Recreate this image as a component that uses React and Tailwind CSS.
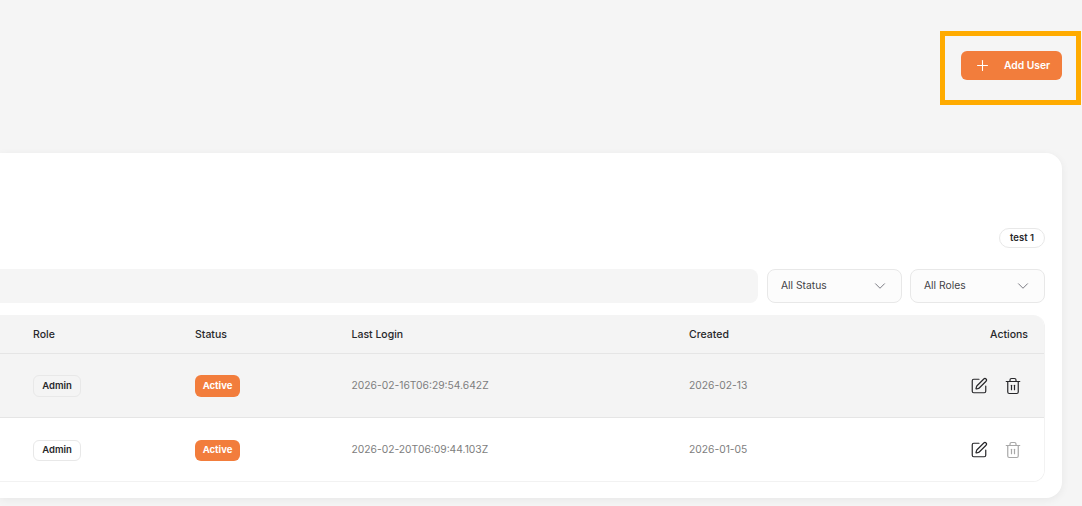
import React from "react";
import { Plus, ChevronDown, SquarePen, Trash2 } from "lucide-react";

const cols = "grid grid-cols-[195px_156.5px_337.5px_1fr] items-center pr-4";

function Row({ login, created, bg, trash, border, h, pill, pillH }) {
  return (
    <div className={`${cols} ${bg} ${border} ${h}`}>
      <div className="flex">
        <span className={`ml-[33px] flex ${pillH} w-[48px] items-center justify-center rounded-md border border-[#e8e8e8] pt-px ${pill} text-[9.5px] font-semibold text-[#27272a]`}>
          Admin
        </span>
      </div>
      <div className="flex">
        <span className={`flex ${pillH} w-[45px] items-center justify-center rounded-md bg-[#f27d3c] pt-px text-[9.5px] font-bold text-white`}>
          Active
        </span>
      </div>
      <div className="text-[10.3px] text-[#7d7d7d]">{login}</div>
      <div className="flex items-center justify-between">
        <span className="text-[10.3px] text-[#7d7d7d]">{created}</span>
        <div className="flex items-center gap-[16px] pr-[6px]">
          <SquarePen size={18} strokeWidth={1.6} className="text-[#27272a]" />
          <Trash2 size={18} strokeWidth={1.6} className={trash} />
        </div>
      </div>
    </div>
  );
}

export default function App() {
  return (
    <div className="relative h-[506px] w-[1082px] overflow-hidden bg-[#f5f5f5] font-['Inter',sans-serif]">
      <header className="flex h-[153px] items-start justify-end pr-5 pt-[51px]">
        <button className="flex h-[29px] w-[101px] items-center rounded-md bg-[#f27d3c] pl-[13px] text-[10.3px] font-semibold text-white">
          <Plus size={17} strokeWidth={1.5} />
          <span className="ml-[13px]">Add User</span>
        </button>
      </header>
      <div className="absolute left-[940px] top-[31px] h-[74px] w-[141px] border-[5px] border-[#ffab00]" />

      <main className="mr-5 h-[345px] rounded-r-2xl bg-white pr-[17px] pt-[75px] shadow-[0_2px_8px_rgba(0,0,0,0.06)]">
        <div className="flex h-[41px] justify-end">
          <span className="flex h-[20px] w-[46px] items-center justify-center rounded-full border border-[#e8e8e8] text-[9.5px] font-semibold text-[#27272a]">
            test 1
          </span>
        </div>
        <div className="flex h-[46px] items-start gap-2">
          <div className="mr-px h-[34px] flex-1 rounded-r-lg bg-[#f5f5f5]" />
          <div className="flex h-[34px] w-[135px] items-center justify-between rounded-lg border border-[#e8e8e8] bg-[#fcfcfc] pl-[13px] pr-[12px] text-[10.3px] text-[#3f3f46]">
            All Status
            <ChevronDown size={18} strokeWidth={1.25} className="text-[#71717a]" />
          </div>
          <div className="flex h-[34px] w-[135px] items-center justify-between rounded-lg border border-[#e8e8e8] bg-[#fcfcfc] pl-[13px] pr-[12px] text-[10.3px] text-[#3f3f46]">
            All Roles
            <ChevronDown size={18} strokeWidth={1.25} className="text-[#71717a]" />
          </div>
        </div>
        <div className="overflow-hidden rounded-r-xl border-b border-r border-[#f2f2f2]">
          <div className={`${cols} h-[39px] border-b border-[#e5e5e5] bg-[#f4f4f4] pt-[2px] text-[10.5px] font-medium text-[#27272a]`}>
            <div className="pl-[33px]">Role</div>
            <div>Status</div>
            <div>Last Login</div>
            <div className="flex justify-between">
              <span>Created</span>
              <span>Actions</span>
            </div>
          </div>
          <Row
            login="2026-02-16T06:29:54.642Z"
            created="2026-02-13"
            bg="bg-[#f4f4f4]"
            border="border-b border-[#e5e5e5]"
            h="h-[64px]"
            trash="text-[#27272a]"
            pill="bg-[#f4f4f4]"
            pillH="h-[22px]"
          />
          <Row
            login="2026-02-20T06:09:44.103Z"
            created="2026-01-05"
            bg="bg-white pt-px"
            border=""
            h="h-[63px]"
            trash="text-[#a8a8a8]"
            pill="bg-white"
            pillH="h-[21px]"
          />
        </div>
      </main>
    </div>
  );
}
